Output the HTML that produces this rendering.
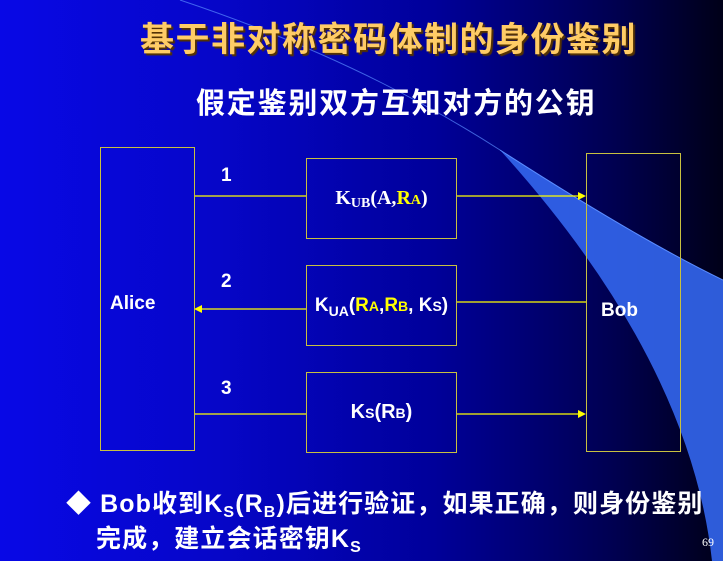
<!DOCTYPE html>
<html><head><meta charset="utf-8"><style>
body{margin:0;width:723px;height:561px;overflow:hidden;position:relative;font-family:"Liberation Sans","Noto Sans CJK SC",sans-serif;background:linear-gradient(90deg,#0808e6 0%,#0606c8 30%,#00009a 60%,#000050 85%,#000018 100%);}
.a{position:absolute;}
.box{position:absolute;border:1.5px solid #c8c040;box-sizing:border-box;color:#fff;font-weight:bold;display:flex;align-items:center;justify-content:center;font-size:20px;white-space:nowrap;}
.y{color:#ffff00}
.t{position:absolute;font-weight:bold;color:#fff;white-space:nowrap;}
.s{font-size:14px;}
.d{font-size:14px;position:relative;top:5px;}
</style></head><body>
<svg class="a" style="left:0;top:0" width="723" height="561">
<path d="M180,0 Q360,60 500,150" stroke="#5a8cff" stroke-width="1" fill="none" opacity="0.7"/>
<path d="M500,150 Q640,240 723,280 L723,561 L712,561 Q690,360 500,150 Z" fill="#3366ee" opacity="0.9"/>
<path d="M500,150 Q640,240 723,280" stroke="#5a8cff" fill="none"/>
<g stroke="#ffff00" stroke-width="1.3" fill="none">
<line x1="194" y1="196" x2="306" y2="196"/><line x1="456" y1="196" x2="582" y2="196"/>
<line x1="586" y1="302" x2="456" y2="302"/><line x1="306" y1="309" x2="198" y2="309"/>
<line x1="194" y1="414" x2="306" y2="414"/><line x1="456" y1="414" x2="582" y2="414"/>
</g>
<g fill="#ffff00"><path d="M586,196 l-8,-4 v8z"/><path d="M194,309 l8,-4 v8z"/><path d="M586,414 l-8,-4 v8z"/></g>
</svg>
<div class="t" style="left:140px;top:12px;font-size:34px;letter-spacing:1.5px;color:#ffcc66;text-shadow:2px 2px 1px #553300">基于非对称密码体制的身份鉴别</div>
<div class="t" style="left:196px;top:80px;font-size:29px;letter-spacing:1.8px">假定鉴别双方互知对方的公钥</div>
<div class="a" style="left:100px;top:147px;width:95px;height:304px;border:1.5px solid #c8c040;box-sizing:border-box"></div>
<div class="t" style="left:110px;top:293px;font-size:19px">Alice</div>
<div class="a" style="left:586px;top:153px;width:95px;height:299px;border:1.5px solid #c8c040;box-sizing:border-box"></div>
<div class="t" style="left:601px;top:300px;font-size:19px">Bob</div>
<div class="box" style="left:306px;top:158px;width:151px;height:81px;font-family:'Liberation Serif',serif;">K<span class="d">UB</span>(A, <span class="y">R<span class="s">A</span></span>)</div>
<div class="box" style="left:306px;top:265px;width:151px;height:81px;font-size:19px">K<span class="d">UA</span>(<span class="y">R<span class="s">A</span></span>, <span class="y">R<span class="s">B</span></span>, K<span class="s">S</span>)</div>
<div class="box" style="left:306px;top:372px;width:151px;height:81px">K<span class="s">S</span>(R<span class="s">B</span>)</div>
<div class="t" style="left:221px;top:165px;font-size:19px">1</div>
<div class="t" style="left:221px;top:271px;font-size:19px">2</div>
<div class="t" style="left:221px;top:378px;font-size:19px">3</div>
<div class="t" style="left:66px;top:490px;font-size:25px;line-height:28px;letter-spacing:1.1px">◆ Bob收到K<span class="d" style="font-size:16px">S</span>(R<span class="d" style="font-size:16px">B</span>)后进行验证，如果正确，则身份鉴别</div>
<div class="t" style="left:96px;top:525px;font-size:25px;line-height:28px;letter-spacing:1.1px">完成，建立会话密钥K<span class="d" style="font-size:16px">S</span></div>
<div class="a" style="left:702px;top:535px;font-size:12px;color:#fff;font-family:'Liberation Serif',serif">69</div>
</body></html>
